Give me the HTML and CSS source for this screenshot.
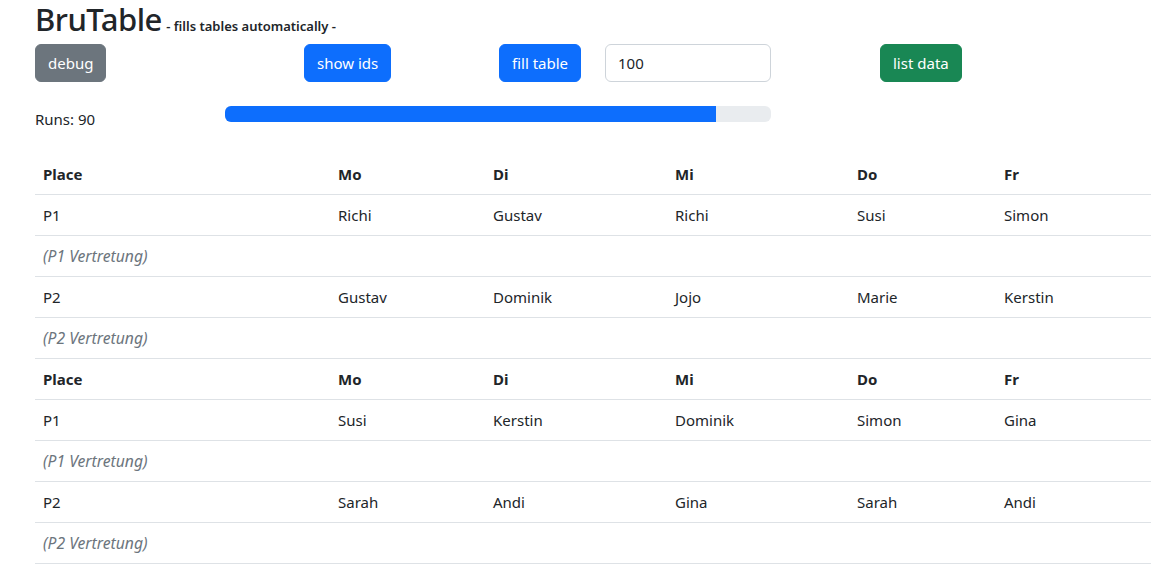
FILE: index.html
```html
<!DOCTYPE html>
<html lang="de">
<head>
<meta charset="utf-8">
<title>BruTable</title>
<link rel="stylesheet" href="styles.css">
</head>
<body>
<div class="page">
  <h2 class="title">BruTable<small class="subtitle"> - fills tables automatically -</small></h2>
  <div class="controls">
    <div><button class="btn btn-secondary">debug</button></div>
    <div><button class="btn btn-primary">show ids</button></div>
    <div><button class="btn btn-primary">fill table</button></div>
    <div><input class="form-control" type="text" value="100"></div>
    <div><button class="btn btn-success">list data</button></div>
  </div>
  <div class="runs-row">
    <div class="runs">Runs: 90</div>
    <div class="progress"><div class="progress-bar" style="width: 90%"></div></div>
  </div>
  <table class="table">
    <colgroup>
      <col class="c-place"><col class="c-mo"><col class="c-di"><col class="c-mi"><col class="c-do"><col class="c-fr">
    </colgroup>
    <tbody>
      <tr class="head"><th>Place</th><th>Mo</th><th>Di</th><th>Mi</th><th>Do</th><th>Fr</th></tr>
      <tr><td>P1</td><td>Richi</td><td>Gustav</td><td>Richi</td><td>Susi</td><td>Simon</td></tr>
      <tr><td class="muted">(P1 Vertretung)</td><td></td><td></td><td></td><td></td><td></td></tr>
      <tr><td>P2</td><td>Gustav</td><td>Dominik</td><td>Jojo</td><td>Marie</td><td>Kerstin</td></tr>
      <tr><td class="muted">(P2 Vertretung)</td><td></td><td></td><td></td><td></td><td></td></tr>
      <tr class="head"><th>Place</th><th>Mo</th><th>Di</th><th>Mi</th><th>Do</th><th>Fr</th></tr>
      <tr><td>P1</td><td>Susi</td><td>Kerstin</td><td>Dominik</td><td>Simon</td><td>Gina</td></tr>
      <tr><td class="muted">(P1 Vertretung)</td><td></td><td></td><td></td><td></td><td></td></tr>
      <tr><td>P2</td><td>Sarah</td><td>Andi</td><td>Gina</td><td>Sarah</td><td>Andi</td></tr>
      <tr><td class="muted">(P2 Vertretung)</td><td></td><td></td><td></td><td></td><td></td></tr>
    </tbody>
  </table>
</div>
</body>
</html>
```

FILE: styles.css
```css
* { box-sizing: border-box; }

html, body {
  margin: 0;
  padding: 0;
  background: #fff;
}

body {
  font-family: "Noto Sans", "Open Sans", sans-serif;
  font-size: 16px;
  line-height: 1.5;
  color: #212529;
}

.page {
  padding: 0 20px 0 35px;
}

.title {
  margin: 0 0 6px 0;
  height: 38px;
  font-size: 31px;
  font-weight: 500;
  line-height: 38px;
  letter-spacing: -0.5px;
}

.subtitle {
  font-size: 13px;
  font-weight: 600;
  line-height: 1;
  letter-spacing: 0;
  padding-left: 1px;
}

.controls {
  display: grid;
  grid-template-columns: 269px 195px 106px 275px auto;
  align-items: start;
}

.btn {
  display: inline-block;
  font-family: inherit;
  font-size: 15px;
  line-height: 24px;
  padding: 6px 12px;
  border: 1px solid transparent;
  border-radius: 6px;
  color: #fff;
  cursor: pointer;
}

.btn-secondary { background: #6c757d; border-color: #6c757d; }
.btn-primary { background: #0d6efd; border-color: #0d6efd; }
.btn-success { background: #198754; border-color: #198754; }

.form-control {
  display: block;
  width: 166px;
  height: 38px;
  padding: 6px 12px;
  font-family: inherit;
  font-size: 15px;
  line-height: 24px;
  color: #212529;
  border: 1px solid #ced4da;
  border-radius: 6px;
  background: #fff;
}

.runs-row {
  display: grid;
  grid-template-columns: 190px 546px;
  align-items: start;
  margin-top: 24px;
}

.runs {
  padding-top: 1px;
  font-size: 15px;
  line-height: 24px;
}

.progress {
  height: 16px;
  background: #e9ecef;
  border-radius: 6px;
  overflow: hidden;
}

.progress-bar {
  height: 100%;
  background: #0d6efd;
}

.table {
  width: 1116px;
  margin-top: 23px;
  border-collapse: collapse;
  table-layout: fixed;
  font-size: 15px;
}

.c-place { width: 295px; }
.c-mo { width: 155px; }
.c-di { width: 182px; }
.c-mi { width: 182px; }
.c-do { width: 147px; }
.c-fr { width: 155px; }

.table th,
.table td {
  padding: 8px;
  line-height: 24px;
  text-align: left;
  border-bottom: 1px solid #dee2e6;
  vertical-align: top;
}

.table th {
  font-weight: 700;
}

.table .muted {
  color: #6c757d;
  font-style: italic;
  font-size: 15.7px;
  white-space: nowrap;
}
```
